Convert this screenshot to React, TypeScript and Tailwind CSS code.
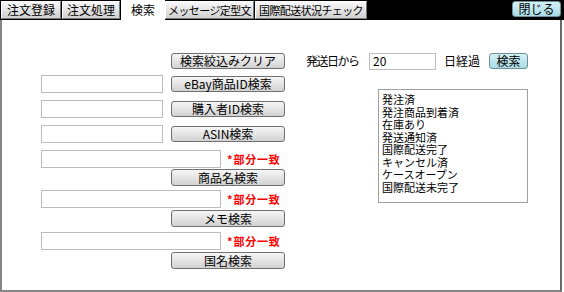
import React from 'react';

const tabs = [
  { label: '注文登録', w: 'w-[60px]', tight: false },
  { label: '注文処理', w: 'w-[58px]', tight: false },
  { label: '検索', w: 'w-[44px]', tight: false, active: true },
  { label: 'メッセージ定型文', w: 'w-[89px]', tight: true },
  { label: '国際配送状況チェック', w: 'w-[112px]', tight: true },
];

const statuses = [
  '発注済',
  '発注商品到着済',
  '在庫あり',
  '発送通知済',
  '国際配送完了',
  'キャンセル済',
  'ケースオープン',
  '国際配送未完了',
];

function GrayButton({ children, className = '' }: { children: React.ReactNode; className?: string }) {
  return (
    <button
      className={`flex w-[114px] items-center justify-center rounded-[3px] border border-[#707070] bg-gradient-to-b from-[#f6f6f6] to-[#d2d2d2] text-[12px] leading-none text-black ${className}`}
    >
      {children}
    </button>
  );
}

function CyanButton({ children, className = '' }: { children: React.ReactNode; className?: string }) {
  return (
    <button
      className={`flex items-center justify-center rounded-[3px] border border-[#6f8f98] bg-gradient-to-b from-[#d4f1f6] to-[#a9dbe5] text-[12px] leading-none text-black ${className}`}
    >
      {children}
    </button>
  );
}

function Field({ className = '' }: { className?: string }) {
  return <div className={`h-[18px] border border-[#bcbcbc] bg-white ${className}`} />;
}

function Partial() {
  return (
    <span className="ml-[6px] text-[11px] font-bold leading-none tracking-[0.8px] text-[#ff0000]">*部分一致</span>
  );
}

export default function App() {
  return (
    <div className="h-[292px] w-[564px] overflow-hidden bg-white font-['Noto_Sans_CJK_JP','Liberation_Sans',sans-serif]">
      {/* Tab strip */}
      <div className="flex h-[20px] items-start bg-black pl-[1px]">
        {tabs.map((t) =>
          t.active ? (
            <div
              key={t.label}
              className={`${t.w} flex h-[20px] items-center justify-center bg-white text-[12px] leading-none text-black`}
            >
              {t.label}
            </div>
          ) : (
            <div
              key={t.label}
              className={`${t.w} mr-[1px] mt-[1px] flex h-[18px] items-center justify-center whitespace-nowrap border-t border-l border-r border-b border-t-white border-l-white border-r-[#7a7a7a] border-b-[#7a7a7a] bg-gradient-to-b from-[#f8f8f8] to-[#d0d0d0] leading-none text-black ${t.tight ? 'text-[11px] tracking-[-0.6px]' : 'text-[12px]'}`}
            >
              {t.label}
            </div>
          )
        )}
        <CyanButton className="ml-auto mr-[3px] mt-[1px] h-[16px] w-[49px]">閉じる</CyanButton>
      </div>

      {/* Search panel */}
      <div className="flex h-[272px] w-[562px] border-b-2 border-l-2 border-r-2 border-b-[#858585] border-l-[#858585] border-r-[#6a6a6a] bg-white">
        {/* Left: text searches */}
        <div className="flex w-[304px] flex-col pl-[39px] pt-[33px]">
          <GrayButton className="ml-[130px] h-[16px]">検索絞込みクリア</GrayButton>

          <div className="mt-[6px] flex items-center">
            <Field className="w-[122px]" />
            <GrayButton className="ml-[8px] h-[16px]">eBay商品ID検索</GrayButton>
          </div>
          <div className="mt-[7px] flex items-center">
            <Field className="w-[122px]" />
            <GrayButton className="ml-[8px] h-[16px]">購入者ID検索</GrayButton>
          </div>
          <div className="mt-[7px] flex items-center">
            <Field className="w-[122px]" />
            <GrayButton className="ml-[8px] h-[16px]">ASIN検索</GrayButton>
          </div>

          <div className="mt-[7px] flex items-center">
            <Field className="w-[180px]" />
            <Partial />
          </div>
          <GrayButton className="ml-[130px] mt-[1px] h-[17px]">商品名検索</GrayButton>

          <div className="mt-[4px] flex items-center">
            <Field className="w-[180px]" />
            <Partial />
          </div>
          <GrayButton className="ml-[130px] mt-[2px] h-[17px]">メモ検索</GrayButton>

          <div className="mt-[5px] flex items-center">
            <Field className="w-[180px]" />
            <Partial />
          </div>
          <GrayButton className="ml-[130px] mt-[2px] h-[17px]">国名検索</GrayButton>
        </div>

        {/* Right: shipping status */}
        <div className="flex flex-col pt-[32px]">
          <div className="flex h-[18px] items-center text-[12px] leading-none text-black">
            <span className="w-[63px] tracking-[-1.5px]">発送日から</span>
            <div className="flex h-[17px] w-[67px] items-center border border-[#bcbcbc] pl-[3px]">20</div>
            <span className="ml-[8px] w-[45px]">日経過</span>
            <CyanButton className="h-[16px] w-[39px]">検索</CyanButton>
          </div>

          <div className="ml-[72px] mt-[19px] h-[114px] w-[150px] border border-[#a0a0a0] pl-[3px] pt-[3px]">
            {statuses.map((s) => (
              <div key={s} className="h-[12.5px] text-[11px] leading-[12.5px] text-black">
                {s}
              </div>
            ))}
          </div>
        </div>
      </div>
    </div>
  );
}
